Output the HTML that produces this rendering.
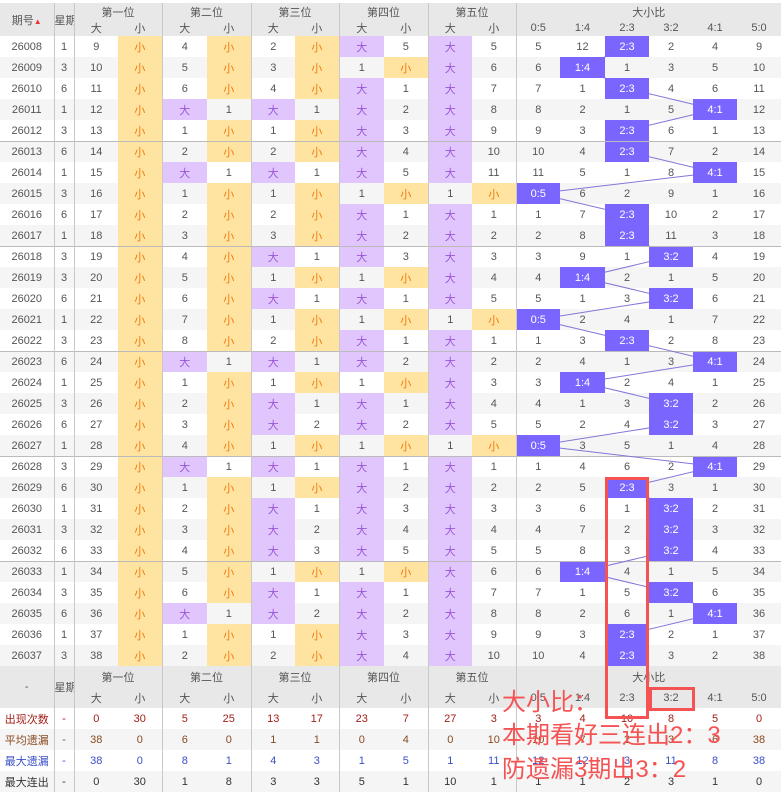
<!DOCTYPE html>
<html><head><meta charset="utf-8">
<style>
html,body{margin:0;padding:0;background:#fff;}
body{width:781px;height:793px;overflow:hidden;position:relative;font-family:"Liberation Sans","Noto Sans CJK SC",sans-serif;}
table{position:absolute;left:0;top:3px;border-collapse:collapse;table-layout:fixed;width:781px;font-size:11px;color:#555;}
td,th{padding:0;text-align:center;height:21px;white-space:nowrap;overflow:hidden;}
th{background:#e8e8e8;font-weight:normal;color:#555;font-size:11px;}
tr.h1 th{height:17px;}
tr.h2 th{height:16px;}
col.g{border-left:1px solid #c8c8c8;}
tbody tr:nth-child(even) td{background:#f5f5f5;}
tbody tr:nth-child(odd) td{background:#fff;}
tbody tr.s td{box-shadow:inset 0 1px #bbb;}
tbody tr td.d{background:#e1c6fd;color:#9a55d8;}
tbody tr td.x{background:#ffe4a1;color:#f07a10;}
tbody tr td.h{background:#7a66ff;color:#fff;position:relative;z-index:2;}
tfoot th{height:21px;}
tfoot td{height:21px;}
tfoot tr:nth-child(odd) td{background:#fff;}
tfoot tr:nth-child(even) td{background:#f5f5f5;}
.r1 td{color:#a3201a;}
.r2 td{color:#8a4a20;}
.r3 td{color:#3a4fc8;}
.r4 td{color:#333;}
svg.ln{position:absolute;left:0;top:3px;z-index:1;pointer-events:none;}
.rb{position:absolute;border:3px solid #f55353;z-index:5;}
.ann{position:absolute;left:502px;color:#f55353;font-size:24px;z-index:6;font-family:"Liberation Sans","Noto Sans CJK SC",sans-serif;line-height:33px;}
</style></head><body>
<table>
<colgroup><col style="width:54px"><col class="g" style="width:20px"><col class="g" style="width:44px"><col style="width:44px"><col class="g" style="width:45px"><col style="width:44px"><col class="g" style="width:44px"><col style="width:44px"><col class="g" style="width:45px"><col style="width:44px"><col class="g" style="width:44px"><col style="width:44px"><col class="g" style="width:44px"><col style="width:45px"><col style="width:44px"><col style="width:44px"><col style="width:44px"><col style="width:44px"></colgroup>
<thead>
<tr class="h1"><th rowspan="2">期号<span style="color:#e33;font-size:8px">▲</span></th><th rowspan="2">星期</th><th colspan="2">第一位</th><th colspan="2">第二位</th><th colspan="2">第三位</th><th colspan="2">第四位</th><th colspan="2">第五位</th><th colspan="6">大小比</th></tr>
<tr class="h2"><th>大</th><th>小</th><th>大</th><th>小</th><th>大</th><th>小</th><th>大</th><th>小</th><th>大</th><th>小</th><th>0:5</th><th>1:4</th><th>2:3</th><th>3:2</th><th>4:1</th><th>5:0</th></tr>
</thead>
<tbody>
<tr><td>26008</td><td>1</td><td>9</td><td class="x">小</td><td>4</td><td class="x">小</td><td>2</td><td class="x">小</td><td class="d">大</td><td>5</td><td class="d">大</td><td>5</td><td>5</td><td>12</td><td class="h">2:3</td><td>2</td><td>4</td><td>9</td></tr>
<tr><td>26009</td><td>3</td><td>10</td><td class="x">小</td><td>5</td><td class="x">小</td><td>3</td><td class="x">小</td><td>1</td><td class="x">小</td><td class="d">大</td><td>6</td><td>6</td><td class="h">1:4</td><td>1</td><td>3</td><td>5</td><td>10</td></tr>
<tr><td>26010</td><td>6</td><td>11</td><td class="x">小</td><td>6</td><td class="x">小</td><td>4</td><td class="x">小</td><td class="d">大</td><td>1</td><td class="d">大</td><td>7</td><td>7</td><td>1</td><td class="h">2:3</td><td>4</td><td>6</td><td>11</td></tr>
<tr><td>26011</td><td>1</td><td>12</td><td class="x">小</td><td class="d">大</td><td>1</td><td class="d">大</td><td>1</td><td class="d">大</td><td>2</td><td class="d">大</td><td>8</td><td>8</td><td>2</td><td>1</td><td>5</td><td class="h">4:1</td><td>12</td></tr>
<tr><td>26012</td><td>3</td><td>13</td><td class="x">小</td><td>1</td><td class="x">小</td><td>1</td><td class="x">小</td><td class="d">大</td><td>3</td><td class="d">大</td><td>9</td><td>9</td><td>3</td><td class="h">2:3</td><td>6</td><td>1</td><td>13</td></tr>
<tr class="s"><td>26013</td><td>6</td><td>14</td><td class="x">小</td><td>2</td><td class="x">小</td><td>2</td><td class="x">小</td><td class="d">大</td><td>4</td><td class="d">大</td><td>10</td><td>10</td><td>4</td><td class="h">2:3</td><td>7</td><td>2</td><td>14</td></tr>
<tr><td>26014</td><td>1</td><td>15</td><td class="x">小</td><td class="d">大</td><td>1</td><td class="d">大</td><td>1</td><td class="d">大</td><td>5</td><td class="d">大</td><td>11</td><td>11</td><td>5</td><td>1</td><td>8</td><td class="h">4:1</td><td>15</td></tr>
<tr><td>26015</td><td>3</td><td>16</td><td class="x">小</td><td>1</td><td class="x">小</td><td>1</td><td class="x">小</td><td>1</td><td class="x">小</td><td>1</td><td class="x">小</td><td class="h">0:5</td><td>6</td><td>2</td><td>9</td><td>1</td><td>16</td></tr>
<tr><td>26016</td><td>6</td><td>17</td><td class="x">小</td><td>2</td><td class="x">小</td><td>2</td><td class="x">小</td><td class="d">大</td><td>1</td><td class="d">大</td><td>1</td><td>1</td><td>7</td><td class="h">2:3</td><td>10</td><td>2</td><td>17</td></tr>
<tr><td>26017</td><td>1</td><td>18</td><td class="x">小</td><td>3</td><td class="x">小</td><td>3</td><td class="x">小</td><td class="d">大</td><td>2</td><td class="d">大</td><td>2</td><td>2</td><td>8</td><td class="h">2:3</td><td>11</td><td>3</td><td>18</td></tr>
<tr class="s"><td>26018</td><td>3</td><td>19</td><td class="x">小</td><td>4</td><td class="x">小</td><td class="d">大</td><td>1</td><td class="d">大</td><td>3</td><td class="d">大</td><td>3</td><td>3</td><td>9</td><td>1</td><td class="h">3:2</td><td>4</td><td>19</td></tr>
<tr><td>26019</td><td>3</td><td>20</td><td class="x">小</td><td>5</td><td class="x">小</td><td>1</td><td class="x">小</td><td>1</td><td class="x">小</td><td class="d">大</td><td>4</td><td>4</td><td class="h">1:4</td><td>2</td><td>1</td><td>5</td><td>20</td></tr>
<tr><td>26020</td><td>6</td><td>21</td><td class="x">小</td><td>6</td><td class="x">小</td><td class="d">大</td><td>1</td><td class="d">大</td><td>1</td><td class="d">大</td><td>5</td><td>5</td><td>1</td><td>3</td><td class="h">3:2</td><td>6</td><td>21</td></tr>
<tr><td>26021</td><td>1</td><td>22</td><td class="x">小</td><td>7</td><td class="x">小</td><td>1</td><td class="x">小</td><td>1</td><td class="x">小</td><td>1</td><td class="x">小</td><td class="h">0:5</td><td>2</td><td>4</td><td>1</td><td>7</td><td>22</td></tr>
<tr><td>26022</td><td>3</td><td>23</td><td class="x">小</td><td>8</td><td class="x">小</td><td>2</td><td class="x">小</td><td class="d">大</td><td>1</td><td class="d">大</td><td>1</td><td>1</td><td>3</td><td class="h">2:3</td><td>2</td><td>8</td><td>23</td></tr>
<tr class="s"><td>26023</td><td>6</td><td>24</td><td class="x">小</td><td class="d">大</td><td>1</td><td class="d">大</td><td>1</td><td class="d">大</td><td>2</td><td class="d">大</td><td>2</td><td>2</td><td>4</td><td>1</td><td>3</td><td class="h">4:1</td><td>24</td></tr>
<tr><td>26024</td><td>1</td><td>25</td><td class="x">小</td><td>1</td><td class="x">小</td><td>1</td><td class="x">小</td><td>1</td><td class="x">小</td><td class="d">大</td><td>3</td><td>3</td><td class="h">1:4</td><td>2</td><td>4</td><td>1</td><td>25</td></tr>
<tr><td>26025</td><td>3</td><td>26</td><td class="x">小</td><td>2</td><td class="x">小</td><td class="d">大</td><td>1</td><td class="d">大</td><td>1</td><td class="d">大</td><td>4</td><td>4</td><td>1</td><td>3</td><td class="h">3:2</td><td>2</td><td>26</td></tr>
<tr><td>26026</td><td>6</td><td>27</td><td class="x">小</td><td>3</td><td class="x">小</td><td class="d">大</td><td>2</td><td class="d">大</td><td>2</td><td class="d">大</td><td>5</td><td>5</td><td>2</td><td>4</td><td class="h">3:2</td><td>3</td><td>27</td></tr>
<tr><td>26027</td><td>1</td><td>28</td><td class="x">小</td><td>4</td><td class="x">小</td><td>1</td><td class="x">小</td><td>1</td><td class="x">小</td><td>1</td><td class="x">小</td><td class="h">0:5</td><td>3</td><td>5</td><td>1</td><td>4</td><td>28</td></tr>
<tr class="s"><td>26028</td><td>3</td><td>29</td><td class="x">小</td><td class="d">大</td><td>1</td><td class="d">大</td><td>1</td><td class="d">大</td><td>1</td><td class="d">大</td><td>1</td><td>1</td><td>4</td><td>6</td><td>2</td><td class="h">4:1</td><td>29</td></tr>
<tr><td>26029</td><td>6</td><td>30</td><td class="x">小</td><td>1</td><td class="x">小</td><td>1</td><td class="x">小</td><td class="d">大</td><td>2</td><td class="d">大</td><td>2</td><td>2</td><td>5</td><td class="h">2:3</td><td>3</td><td>1</td><td>30</td></tr>
<tr><td>26030</td><td>1</td><td>31</td><td class="x">小</td><td>2</td><td class="x">小</td><td class="d">大</td><td>1</td><td class="d">大</td><td>3</td><td class="d">大</td><td>3</td><td>3</td><td>6</td><td>1</td><td class="h">3:2</td><td>2</td><td>31</td></tr>
<tr><td>26031</td><td>3</td><td>32</td><td class="x">小</td><td>3</td><td class="x">小</td><td class="d">大</td><td>2</td><td class="d">大</td><td>4</td><td class="d">大</td><td>4</td><td>4</td><td>7</td><td>2</td><td class="h">3:2</td><td>3</td><td>32</td></tr>
<tr><td>26032</td><td>6</td><td>33</td><td class="x">小</td><td>4</td><td class="x">小</td><td class="d">大</td><td>3</td><td class="d">大</td><td>5</td><td class="d">大</td><td>5</td><td>5</td><td>8</td><td>3</td><td class="h">3:2</td><td>4</td><td>33</td></tr>
<tr class="s"><td>26033</td><td>1</td><td>34</td><td class="x">小</td><td>5</td><td class="x">小</td><td>1</td><td class="x">小</td><td>1</td><td class="x">小</td><td class="d">大</td><td>6</td><td>6</td><td class="h">1:4</td><td>4</td><td>1</td><td>5</td><td>34</td></tr>
<tr><td>26034</td><td>3</td><td>35</td><td class="x">小</td><td>6</td><td class="x">小</td><td class="d">大</td><td>1</td><td class="d">大</td><td>1</td><td class="d">大</td><td>7</td><td>7</td><td>1</td><td>5</td><td class="h">3:2</td><td>6</td><td>35</td></tr>
<tr><td>26035</td><td>6</td><td>36</td><td class="x">小</td><td class="d">大</td><td>1</td><td class="d">大</td><td>2</td><td class="d">大</td><td>2</td><td class="d">大</td><td>8</td><td>8</td><td>2</td><td>6</td><td>1</td><td class="h">4:1</td><td>36</td></tr>
<tr><td>26036</td><td>1</td><td>37</td><td class="x">小</td><td>1</td><td class="x">小</td><td>1</td><td class="x">小</td><td class="d">大</td><td>3</td><td class="d">大</td><td>9</td><td>9</td><td>3</td><td class="h">2:3</td><td>2</td><td>1</td><td>37</td></tr>
<tr><td>26037</td><td>3</td><td>38</td><td class="x">小</td><td>2</td><td class="x">小</td><td>2</td><td class="x">小</td><td class="d">大</td><td>4</td><td class="d">大</td><td>10</td><td>10</td><td>4</td><td class="h">2:3</td><td>3</td><td>2</td><td>38</td></tr>
</tbody>
<tfoot>
<tr><th rowspan="2">-</th><th rowspan="2">星期</th><th colspan="2">第一位</th><th colspan="2">第二位</th><th colspan="2">第三位</th><th colspan="2">第四位</th><th colspan="2">第五位</th><th colspan="6">大小比</th></tr>
<tr><th>大</th><th>小</th><th>大</th><th>小</th><th>大</th><th>小</th><th>大</th><th>小</th><th>大</th><th>小</th><th>0:5</th><th>1:4</th><th>2:3</th><th>3:2</th><th>4:1</th><th>5:0</th></tr>
<tr class="r1"><td>出现次数</td><td>-</td><td>0</td><td>30</td><td>5</td><td>25</td><td>13</td><td>17</td><td>23</td><td>7</td><td>27</td><td>3</td><td>3</td><td>4</td><td>10</td><td>8</td><td>5</td><td>0</td></tr>
<tr class="r2"><td>平均遗漏</td><td>-</td><td>38</td><td>0</td><td>6</td><td>0</td><td>1</td><td>1</td><td>0</td><td>4</td><td>0</td><td>10</td><td>10</td><td>7</td><td>2</td><td>3</td><td>6</td><td>38</td></tr>
<tr class="r3"><td>最大遗漏</td><td>-</td><td>38</td><td>0</td><td>8</td><td>1</td><td>4</td><td>3</td><td>1</td><td>5</td><td>1</td><td>11</td><td>12</td><td>12</td><td>3</td><td>11</td><td>8</td><td>38</td></tr>
<tr class="r4"><td>最大连出</td><td>-</td><td>0</td><td>30</td><td>1</td><td>8</td><td>3</td><td>3</td><td>5</td><td>1</td><td>10</td><td>1</td><td>1</td><td>1</td><td>2</td><td>3</td><td>1</td><td>0</td></tr>
</tfoot>
</table>
<svg class="ln" width="781" height="700" viewBox="0 0 781 700"><polyline fill="none" stroke="#8078d8" stroke-width="1" points="627,43.5 582.5,64.5 627,85.5 715,106.5 627,127.5 627,148.5 715,169.5 538,190.5 627,211.5 627,232.5 671,253.5 582.5,274.5 671,295.5 538,316.5 627,337.5 715,358.5 582.5,379.5 671,400.5 671,421.5 538,442.5 715,463.5 627,484.5 671,505.5 671,526.5 671,547.5 582.5,568.5 671,589.5 715,610.5 627,631.5 627,652.5"/></svg>
<div class="rb" style="left:605px;top:477px;width:38px;height:236px;"></div>
<div class="rb" style="left:649px;top:687px;width:40px;height:18px;"></div>
<div class="ann" style="top:686px;">大小比：</div>
<div class="ann" style="top:719px;">本期看好三连出2：3</div>
<div class="ann" style="top:753px;">防遗漏3期出3：2</div>
</body></html>
